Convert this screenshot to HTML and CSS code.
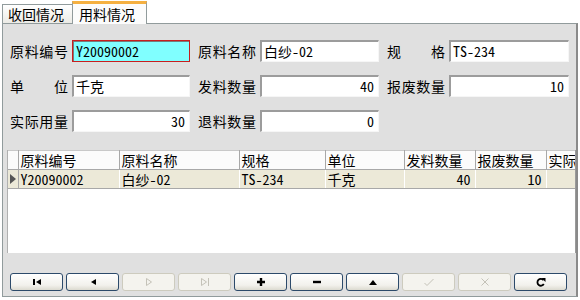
FILE: index.html
```html
<!DOCTYPE html>
<html lang="zh">

<head>
    <meta charset="UTF-8">
    <title>用料情况</title>
    <link rel="stylesheet" href="styles.css">
</head>

<body>
    <div class="tabs">
        <div class="tab">收回情况</div>
        <div class="tab active">用料情况</div>
    </div>

    <div class="pane">
        <div class="form">
            <div class="field">
                <span class="label">原料编号</span>
                <span class="edit focus">Y20090002</span>
            </div>
            <div class="field">
                <span class="label">原料名称</span>
                <span class="edit">白纱-02</span>
            </div>
            <div class="field">
                <span class="label">规格</span>
                <span class="edit">TS-234</span>
            </div>

            <div class="field">
                <span class="label">单位</span>
                <span class="edit">千克</span>
            </div>
            <div class="field">
                <span class="label">发料数量</span>
                <span class="edit num">40</span>
            </div>
            <div class="field">
                <span class="label">报废数量</span>
                <span class="edit num">10</span>
            </div>

            <div class="field">
                <span class="label">实际用量</span>
                <span class="edit num">30</span>
            </div>
            <div class="field">
                <span class="label">退料数量</span>
                <span class="edit num">0</span>
            </div>
        </div>

        <div class="grid">
            <table>
                <colgroup>
                    <col class="c-ind">
                    <col class="c-code">
                    <col class="c-name">
                    <col class="c-spec">
                    <col class="c-unit">
                    <col class="c-qty">
                    <col class="c-qty">
                    <col class="c-rest">
                </colgroup>
                <tr class="head">
                    <th></th>
                    <th>原料编号</th>
                    <th>原料名称</th>
                    <th>规格</th>
                    <th>单位</th>
                    <th>发料数量</th>
                    <th>报废数量</th>
                    <th>实际</th>
                </tr>
                <tr class="row">
                    <td class="ind"><span class="arrow"></span></td>
                    <td>Y20090002</td>
                    <td>白纱-02</td>
                    <td>TS-234</td>
                    <td>千克</td>
                    <td class="num">40</td>
                    <td class="num">10</td>
                    <td></td>
                </tr>
            </table>
        </div>

        <div class="navbar">
            <!-- first -->
            <button class="btn">
                <svg width="10" height="8" viewBox="0 0 10 8"><rect x="1" y="1" width="2" height="6" fill="#000"/><path d="M9 1 L4 4 L9 7 Z" fill="#000"/></svg>
            </button>
            <!-- prior -->
            <button class="btn">
                <svg width="10" height="8" viewBox="0 0 10 8"><path d="M8 1 L3 4 L8 7 Z" fill="#000"/></svg>
            </button>
            <!-- next -->
            <button class="btn off">
                <svg width="10" height="10" viewBox="0 0 10 10"><path d="M2.5 1.5 L2.5 8.5 M2.5 1.5 L7.5 5 L2.5 8.5" fill="none" stroke="#c4c2b8" stroke-width="1"/></svg>
            </button>
            <!-- last -->
            <button class="btn off">
                <svg width="10" height="10" viewBox="0 0 10 10"><path d="M1.5 1.5 L1.5 8.5 M1.5 1.5 L6.5 5 L1.5 8.5 M8.5 1 L8.5 9" fill="none" stroke="#c4c2b8" stroke-width="1"/></svg>
            </button>
            <!-- insert -->
            <button class="btn">
                <svg width="10" height="10" viewBox="0 0 10 10"><path d="M5 1 V9 M1 5 H9" stroke="#000" stroke-width="2.4"/></svg>
            </button>
            <!-- delete -->
            <button class="btn">
                <svg width="10" height="10" viewBox="0 0 10 10"><path d="M1 5 H9" stroke="#000" stroke-width="2.4"/></svg>
            </button>
            <!-- edit -->
            <button class="btn">
                <svg width="10" height="8" viewBox="0 0 10 8"><path d="M1 7 L5 2 L9 7 Z" fill="#000"/></svg>
            </button>
            <!-- post -->
            <button class="btn off">
                <svg width="12" height="10" viewBox="0 0 12 10"><path d="M1.5 6 L4 8.5 L10.5 2" fill="none" stroke="#c4c2b8" stroke-width="1"/></svg>
            </button>
            <!-- cancel -->
            <button class="btn off">
                <svg width="10" height="10" viewBox="0 0 10 10"><path d="M1.5 1.5 L8.5 8.5 M8.5 1.5 L1.5 8.5" fill="none" stroke="#c4c2b8" stroke-width="1"/></svg>
            </button>
            <!-- refresh -->
            <button class="btn">
                <svg width="10" height="10" viewBox="0 0 10 10"><path d="M7.5 3.2 A3.4 3.4 0 1 0 7.8 7" fill="none" stroke="#000" stroke-width="1.8"/><path d="M5.5 1 L9.5 1 L9.5 5 Z" fill="#000"/></svg>
            </button>
        </div>
    </div>
</body>

</html>
```

FILE: styles.css
```css
html,
body {
    margin: 0;
    height: 100%;
    overflow: hidden;
    background-color: #ffffff;
    font-family: "Noto Sans Mono CJK SC", "Noto Sans CJK SC", sans-serif;
    font-size: 14px;
    color: #000;
}

/* tabs */

.tabs {
    display: flex;
    align-items: flex-end;
    height: 23px;
    padding-left: 2px;
}

.tab {
    box-sizing: border-box;
    width: 71px;
    height: 19px;
    line-height: 18px;
    padding-left: 5px;
    border: 1px solid #919b9c;
    border-bottom: none;
    background: linear-gradient(#ffffff, #ecebe6);
}

.tab.active {
    width: 75px;
    height: 23px;
    line-height: 20px;
    padding-left: 6px;
    border-top: 3px solid #f5b041;
    background: #fcfcfc;
    position: relative;
    top: 1px;
    margin-left: -1px;
}

/* page */

.pane {
    box-sizing: border-box;
    height: 274px;
    margin: 0 2px;
    border: 1px solid #919b9c;
    border-right: 2px solid #8a8a8a;
    background-color: #e0e0e0;
    padding: 16px 2px 0 2px;
}

.form {
    display: grid;
    grid-template-columns: 180px 181px 182px;
    column-gap: 8px;
    row-gap: 13px;
    padding-left: 5px;
}

.field {
    display: flex;
    height: 22px;
    align-items: center;
}

.label {
    width: 58px;
    margin-right: 4px;
    text-align-last: justify;
    white-space: nowrap;
}

.edit {
    box-sizing: border-box;
    flex: 1;
    height: 22px;
    line-height: 19px;
    padding: 0 4px 0 2px;
    background-color: #ffffff;
    border-style: solid;
    border-width: 2px 1px 1px 2px;
    border-color: #9c9c9c #f6f6f6 #f6f6f6 #9c9c9c;
    white-space: nowrap;
    overflow: hidden;
}

.edit.num {
    text-align: right;
}

.edit.focus {
    background-color: #80ffff;
    border: 1px solid #c81e1e;
    box-shadow: inset 1px 1px 0 #7a7a7a;
    line-height: 20px;
    padding-left: 3px;
}

/* data grid */

.grid {
    box-sizing: border-box;
    height: 103px;
    margin: 18px 0 0 2px;
    width: 569px;
    background-color: #ffffff;
    border-left: 1px solid #b0b0b0;
    border-right: 1px solid #9a9a9a;
    overflow: hidden;
}

.grid table {
    table-layout: fixed;
    border-collapse: collapse;
    width: 620px;
}

.c-ind { width: 10px; }
.c-code { width: 101px; }
.c-name { width: 120px; }
.c-spec { width: 86px; }
.c-unit { width: 79px; }
.c-qty { width: 71px; }
.c-rest { width: 82px; }

.grid th,
.grid td {
    height: 18px;
    padding: 0 2px;
    font-weight: normal;
    text-align: left;
    white-space: nowrap;
    overflow: hidden;
    line-height: 17px;
}

.head th {
    background-color: #fbfbfb;
    border-right: 1px solid #a8a8a8;
    border-bottom: 1px solid #a8a8a8;
    border-top: 1px solid #c8c8c8;
}

.row td {
    background-color: #ece9d8;
    border-right: 1px solid #ffffff;
    border-bottom: 1px solid #a8a8a8;
}

.row td.ind {
    border-right: 1px solid #a8a8a8;
    padding: 0;
}

.grid .num {
    text-align: right;
    padding-right: 4px;
}

.arrow {
    display: block;
    width: 0;
    height: 0;
    margin-left: 2px;
    border-style: solid;
    border-width: 5px 0 5px 6px;
    border-color: transparent transparent transparent #555;
}

/* navigator */

.navbar {
    display: flex;
    gap: 3px;
    margin: 20px 0 0 5px;
}

.btn {
    box-sizing: border-box;
    width: 53px;
    height: 18px;
    padding: 0;
    display: flex;
    align-items: center;
    justify-content: center;
    border: 1px solid #2c4a6a;
    border-radius: 3px;
    background: linear-gradient(#ffffff, #f2f1ec 70%, #dcdad0);
}

.btn.off {
    border-color: #cdcbbe;
    background: #f4f3ee;
}
```
